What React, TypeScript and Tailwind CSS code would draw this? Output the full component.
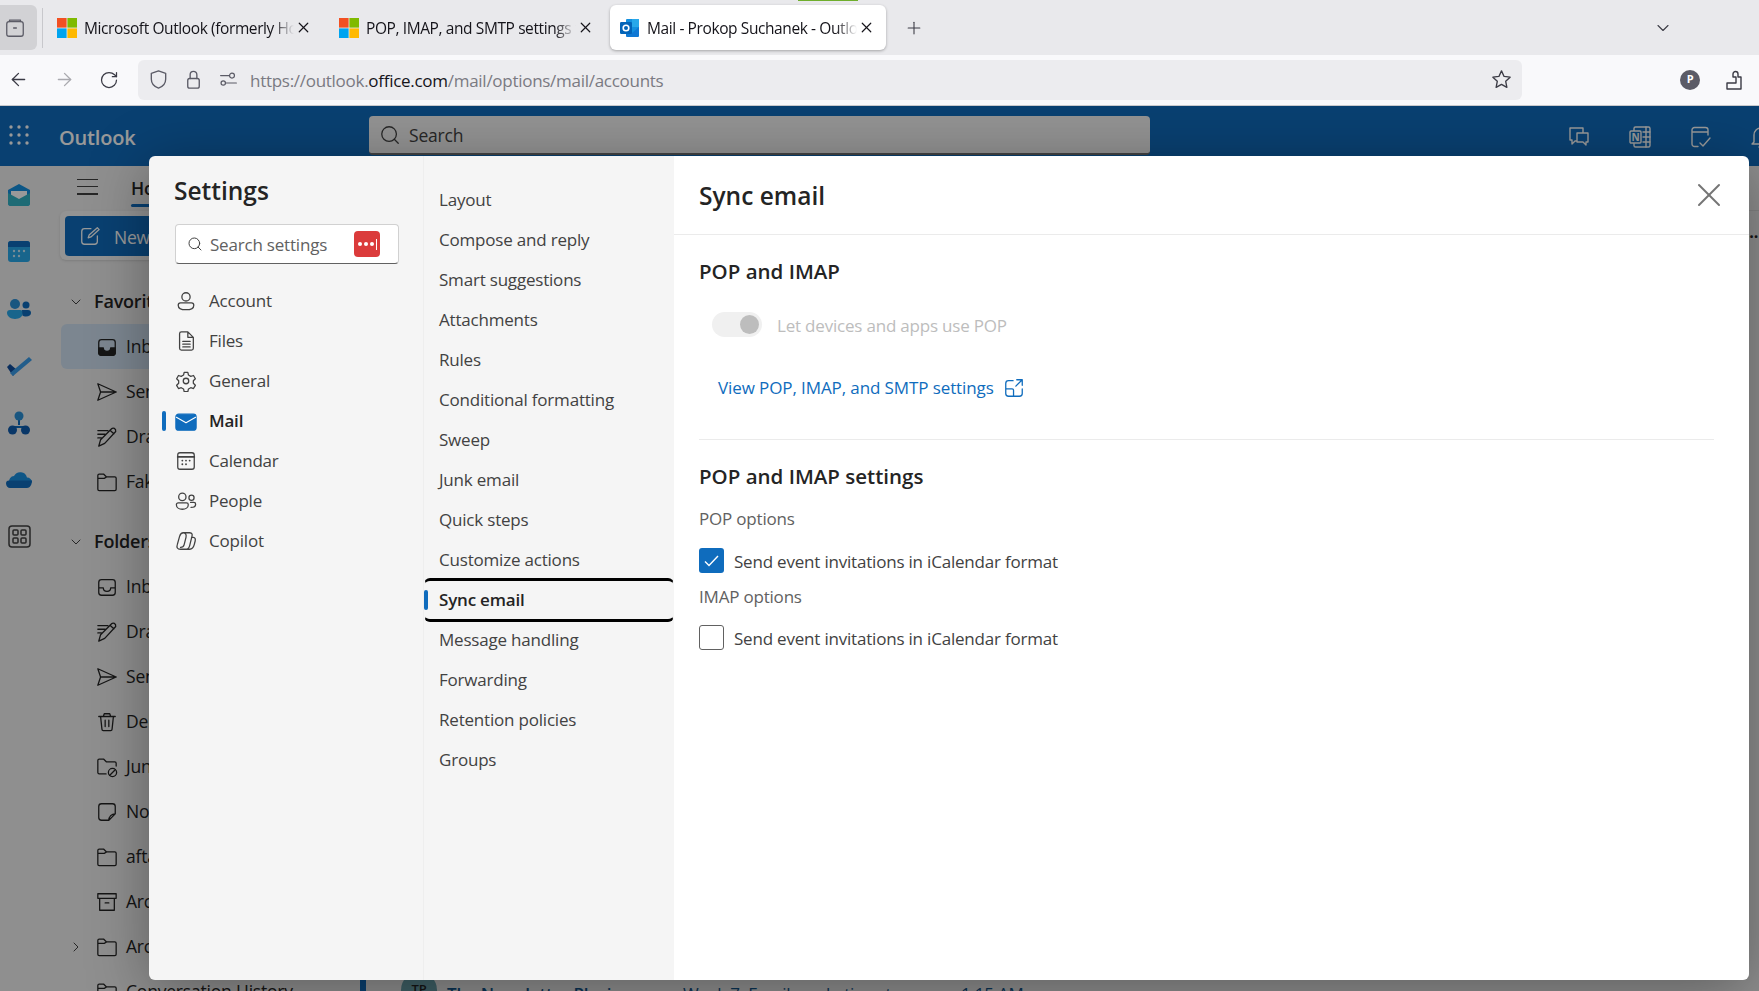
import { ChevronDown, ChevronRight, Plus, X, ArrowLeft, ArrowRight, RotateCw, Search } from 'lucide-react'
import type { ReactNode } from 'react'

const font = 'font-["Open_Sans","Noto_Sans",sans-serif]'

function Line({ children, size = 24, className = '' }: { children: ReactNode; size?: number; className?: string }) {
  return (
    <svg width={size} height={size} viewBox="0 0 24 24" fill="none" stroke="currentColor" strokeWidth="1.4" strokeLinecap="round" strokeLinejoin="round" className={`shrink-0 ${className}`}>
      {children}
    </svg>
  )
}

function MsLogo() {
  return (
    <svg width="20" height="20" viewBox="0 0 20 20" className="shrink-0">
      <rect width="9.6" height="9.6" fill="#f25022" />
      <rect x="10.4" width="9.6" height="9.6" fill="#7fba00" />
      <rect y="10.4" width="9.6" height="9.6" fill="#00a4ef" />
      <rect x="10.4" y="10.4" width="9.6" height="9.6" fill="#ffb900" />
    </svg>
  )
}

function OutlookLogo() {
  return (
    <svg width="20" height="20" viewBox="0 0 20 20" className="shrink-0">
      <rect x="6" y="1" width="13" height="16" rx="1" fill="#1490df" />
      <rect x="12" y="1" width="7" height="8" fill="#28a8ea" />
      <path d="M6 10l6 5 7-6v9a1 1 0 0 1-1 1H7a1 1 0 0 1-1-1z" fill="#0f78d4" />
      <rect x="0" y="4" width="12" height="12" rx="1.2" fill="#0364b8" />
      <circle cx="6" cy="10" r="2.8" fill="none" stroke="#fff" strokeWidth="1.6" />
    </svg>
  )
}

function Tab({ logo, title, active }: { logo: ReactNode; title: string; active?: boolean }) {
  return (
    <div className={`flex h-[45px] w-[276px] items-center rounded-md pl-[10px] ${active ? 'bg-white shadow-[0_1px_3px_rgba(0,0,0,0.3)]' : ''}`}>
      {logo}
      <span className="ml-[7px] w-[210px] overflow-hidden whitespace-nowrap pt-[2px] text-[15.500px] tracking-[-0.4px] text-[#15141a] [mask-image:linear-gradient(to_right,black_90%,transparent)]">
        {title}
      </span>
      <X size={17} strokeWidth={1.700} className="ml-[1px] text-[#15141a]" />
    </div>
  )
}

function BrowserChrome() {
  return (
    <>
      <div className="relative flex h-[55px] items-center bg-[#e9e9ec]">
        <div className="absolute left-[798px] top-0 h-[1px] w-[60px] bg-[#6fae2c]" />
        <div className="flex h-[45px] w-[37px] items-center justify-center rounded-r-md bg-[#d2d2d5] pr-[8px] text-[#5b5b66]">
          <Line size={22}>
            <rect x="3" y="5" width="18" height="16" rx="2.5" />
            <path d="M6 5V3.5h12V5M10.5 12h3" />
          </Line>
        </div>
        <div className="ml-[5px] h-[40px] w-px bg-[#c8c8cc]" />
        <div className="ml-[4px]">
          <Tab logo={<MsLogo />} title="Microsoft Outlook (formerly Hotmail)" />
        </div>
        <div className="ml-[6px]">
          <Tab logo={<MsLogo />} title="POP, IMAP, and SMTP settings for Outlook" />
        </div>
        <div className="ml-[5px]">
          <Tab logo={<OutlookLogo />} title="Mail - Prokop Suchanek - Outlook" active />
        </div>
        <Plus size={20} strokeWidth={1.3} className="ml-[18px] text-[#3b3b45]" />
        <ChevronDown size={20} strokeWidth={1.3} className="ml-auto mr-[86px] text-[#3b3b45]" />
      </div>
      <div className="flex h-[51px] items-center border-b border-[#c9c9cc] bg-[#f9f9fb] pb-[1px]">
        <ArrowLeft size={21} strokeWidth={1.5} className="ml-[8px] text-[#3b3b45]" />
        <ArrowRight size={21} strokeWidth={1.5} className="ml-[25px] text-[#a9a9ae]" />
        <RotateCw size={20} strokeWidth={1.5} className="ml-[24px] text-[#3b3b45]" />
        <div className="ml-[19px] flex h-[40px] w-[1384px] items-center rounded-md bg-[#ececef] text-[#5b5b66]">
          <Line size={23} className="ml-[9px]">
            <path d="M12 3l7.5 2.5v6c0 4.5-3 8-7.5 9.5-4.500-1.500-7.500-5-7.500-9.500v-6z" />
          </Line>
          <Line size={23} className="ml-[12px]">
            <rect x="6" y="11" width="12" height="10" rx="2" />
            <path d="M8.500 11V7a3.500 3.500 0 0 1 7 0v4" />
          </Line>
          <Line size={21} className="ml-[13px]">
            <circle cx="16" cy="7.500" r="2.800" />
            <circle cx="6" cy="16" r="2.500" />
            <path d="M3 7.500h10M9 16h12" />
          </Line>
          <span className="ml-[11px] whitespace-nowrap pt-[3px] text-[17px] tracking-[-0.28px] text-[#7a7a82]">
            https://outlook.<span className="text-[#15141a]">office.com</span>/mail/options/mail/accounts
          </span>
          <Line size={23} className="ml-auto mr-[9px] text-[#3b3b45]">
            <path d="M12 3l2.700 5.800 6.300.8-4.600 4.300 1.200 6.300L12 17.100l-5.600 3.100 1.200-6.300L3 9.600l6.300-.8z" />
          </Line>
        </div>
        <div className="ml-[158px] flex size-[20px] items-center justify-center rounded-full bg-[#5b5b66] text-[11px] font-bold text-white">P</div>
        <Line size={24} className="ml-[22px] text-[#3b3b45]">
          <path d="M5 21v-6h9V9h-3V6a2.500 2.500 0 0 1 5 0v3h3v12z" />
        </Line>
      </div>
    </>
  )
}

function RailIcon({ children }: { children: ReactNode }) {
  return <div className="flex h-[57px] items-center justify-center">{children}</div>
}

function Rail() {
  return (
    <div className="flex w-[38px] shrink-0 flex-col">
      <RailIcon>
        <svg width="24" height="22" viewBox="0 0 24 22">
          <path d="M12 0l11 6v13a3 3 0 0 1-3 3H4a3 3 0 0 1-3-3V6z" fill="#1490df" />
          <path d="M4 7h16v5l-8 4-8-4z" fill="#fff" />
          <path d="M1 19V9l11 6 11-6v10a3 3 0 0 1-3 3H4a3 3 0 0 1-3-3z" fill="#33b3c4" />
        </svg>
      </RailIcon>
      <RailIcon>
        <svg width="22" height="21" viewBox="0 0 22 21">
          <rect width="22" height="21" rx="3" fill="#28a8ea" />
          <path d="M0 6V3a3 3 0 0 1 3-3h16a3 3 0 0 1 3 3v3z" fill="#0f6cbd" />
          <g fill="#fff" opacity="0.75">
            <circle cx="6" cy="10" r="1.200" /><circle cx="11" cy="10" r="1.200" /><circle cx="16" cy="10" r="1.200" />
            <circle cx="6" cy="15" r="1.200" /><circle cx="11" cy="15" r="1.200" />
          </g>
        </svg>
      </RailIcon>
      <RailIcon>
        <svg width="24" height="20" viewBox="0 0 24 20">
          <circle cx="8" cy="5" r="5" fill="#2a8fd6" />
          <circle cx="19" cy="6" r="3.500" fill="#0f6cbd" />
          <path d="M0 14a3 3 0 0 1 3-3h10a3 3 0 0 1 3 3c0 3-3.500 6-8 6s-8-3-8-6z" fill="#28a8ea" />
          <path d="M15 11h6a3 3 0 0 1 3 3c0 2-2 3.500-5 3.500-1.500 0-2.500-.3-3.500-1z" fill="#0f6cbd" />
        </svg>
      </RailIcon>
      <RailIcon>
        <svg width="25" height="20" viewBox="0 0 25 20">
          <path d="M0 11l3-3 7 6-4 6z" fill="#0f4c9c" />
          <path d="M6 20l-3-3L22 1l3 3z" fill="#3a9be8" />
        </svg>
      </RailIcon>
      <RailIcon>
        <svg width="22" height="24" viewBox="0 0 22 24" fill="none">
          <path d="M11 8v6M4 19v-3h14v3" stroke="#0f6cbd" strokeWidth="2" />
          <circle cx="11" cy="5" r="4.500" fill="#2a8fd6" />
          <circle cx="4.500" cy="19" r="4.500" fill="#0f5cae" />
          <circle cx="17.500" cy="19" r="4.500" fill="#0f5cae" />
        </svg>
      </RailIcon>
      <RailIcon>
        <svg width="26" height="17" viewBox="0 0 26 17">
          <path d="M8 5a7 7 0 0 1 13 1.500 5 5 0 0 1 5 5H3a5.500 5.500 0 0 1 5-6.500z" fill="#1a8fe0" />
          <path d="M0 12.500a3 3 0 0 1 3-3h23c0 4-2 7.500-5 7.500H4c-2 0-4-2-4-4.500z" fill="#0f6cbd" />
        </svg>
      </RailIcon>
      <RailIcon>
        <svg width="23" height="23" viewBox="0 0 23 23" fill="none" stroke="#424242" strokeWidth="1.500">
          <rect x="1" y="1" width="21" height="21" rx="3" />
          <rect x="5" y="5" width="5" height="5" rx="1" /><rect x="13" y="5" width="5" height="5" rx="1" />
          <rect x="5" y="13" width="5" height="5" rx="1" /><rect x="13" y="13" width="5" height="5" rx="1" />
        </svg>
      </RailIcon>
    </div>
  )
}

const folderPath = <path d="M2 20V5a1.500 1.500 0 0 1 1.500-1.500h5l3 3h9A1.500 1.500 0 0 1 22 8v12a1.500 1.500 0 0 1-1.500 1.500h-17A1.500 1.500 0 0 1 2 20zM2 8h7l2.500-1.500" />
const sendPath = <path d="M2 3l20 9-20 9 3-9zM5 12h17" />
const draftPath = (
  <path d="M2 5h11M2 9h8M2 13h4M3 22l2-7L17 3c1.500-1.500 5-.5 4.500 3L9.500 19zM15.500 5l4 3.500" />
)
const inboxPath = <path d="M3 7a3 3 0 0 1 3-3h12a3 3 0 0 1 3 3v11a3 3 0 0 1-3 3H6a3 3 0 0 1-3-3zM3 13h5c0 5 8 5 8 0h5" />
const inboxFilled = (
  <>
    <path d="M3 7a3 3 0 0 1 3-3h12a3 3 0 0 1 3 3v11a3 3 0 0 1-3 3H6a3 3 0 0 1-3-3z" />
    <path d="M3 13h5c0 5 8 5 8 0h5v5a3 3 0 0 1-3 3H6a3 3 0 0 1-3-3z" fill="currentColor" />
  </>
)

function FolderRow({ icon, label, active, caret }: { icon: ReactNode; label: string; active?: boolean; caret?: boolean }) {
  return (
    <div className={`relative flex h-[45px] items-center whitespace-nowrap pl-[35px] text-[17.500px] text-[#242424] ${active ? 'rounded-md bg-[#cfe0f0]' : ''}`}>
      {caret && <ChevronRight size={16} strokeWidth={1.5} className="absolute left-[7px] text-[#424242]" />}
      <Line size={22}>{icon}</Line>
      <span className="ml-[8px]">{label}</span>
    </div>
  )
}

function GroupTitle({ label }: { label: string }) {
  return (
    <div className="flex h-[45px] items-center pl-[7px] text-[18px] font-semibold text-[#242424]">
      <ChevronDown size={16} strokeWidth={1.5} className="text-[#424242]" />
      <span className="ml-[10px]">{label}</span>
    </div>
  )
}

function OutlookApp() {
  return (
    <div className="flex h-[885px] flex-col bg-[#eeeeee]">
      <div className="flex h-[60px] shrink-0 bg-[#0f6cbd] text-white">
        <div className="flex w-[38px] shrink-0 items-center justify-center pb-[2px]">
          <svg width="20" height="20" viewBox="0 0 20 20" fill="currentColor">
            {[2, 10, 18].flatMap((y) => [2, 10, 18].map((x) => <circle key={`${x}-${y}`} cx={x} cy={y} r="1.700" />))}
          </svg>
        </div>
        <span className="ml-[21px] mt-[17px] w-[310px] shrink-0 text-[20px] font-semibold">Outlook</span>
        <div className="mt-[10px] flex h-[39px] w-[781px] shrink-0 items-center rounded-[4px] border-b-2 border-[#707070] bg-[#f3f3f3] text-[#424242]">
          <Search size={22} strokeWidth={1.400} className="ml-[10px]" />
          <span className="ml-[8px] pt-[1px] text-[17.500px]">Search</span>
        </div>
        <div className="ml-[417px] mt-[19px] flex shrink-0 gap-[36.500px]">
          <Line size={24}>
            <path d="M16 8V3H3v12h2v4l3-3h2M10 8h11v9h-2v3l-3-3h-6z" />
          </Line>
          <Line size={24}>
            <rect x="6" y="2" width="16" height="20" rx="1.500" />
            <rect x="2" y="6" width="11" height="12" rx="1" fill="#0f6cbd" />
            <text x="7.500" y="15.500" textAnchor="middle" fontSize="10" fontWeight="700" fill="currentColor" stroke="none">N</text>
            <path d="M15 7h7M15 12h7M15 17h7M18 2v20" />
          </Line>
          <Line size={24}>
            <path d="M20 10V5a2.500 2.500 0 0 0-2.500-2.500h-11A2.500 2.500 0 0 0 4 5v14a2.500 2.500 0 0 0 2.500 2.500H10M4 7h16M12 18l3 3 7-8" />
          </Line>
          <Line size={24}>
            <path d="M5 17V10a7 7 0 0 1 14 0v7l2 2H3zM10 22h4" />
          </Line>
        </div>
      </div>
      <div className="flex min-h-0 flex-1 overflow-hidden">
        <Rail />
        <div className="w-[310px] shrink-0 pl-[23px]">
          <div className="flex h-[45px] items-center">
            <div className="mb-[4px] ml-[16px] flex h-[16px] w-[21px] flex-col justify-between">
              <div className="h-[1.500px] bg-[#424242]" /><div className="h-[1.500px] bg-[#424242]" /><div className="h-[1.500px] bg-[#424242]" />
            </div>
            <div className="relative ml-[33px] text-[17.500px] font-semibold text-[#242424]">
              Home
              <div className="absolute -bottom-[5px] left-0 h-[3px] w-full rounded bg-[#0f6cbd]" />
            </div>
          </div>
          <div className="-ml-[1px] flex h-[49px] items-center rounded-md bg-[#f5f5f5] pl-[5px] shadow-sm">
            <div className="flex h-[40px] w-[150px] items-center rounded bg-[#0f6cbd] pl-[14px] text-white">
              <Line size={22}><path d="M20 12v6a3 3 0 0 1-3 3H6a3 3 0 0 1-3-3V7a3 3 0 0 1 3-3h7M10 14l1-3 9-8 2 2-9 8z" /></Line>
              <span className="ml-[13px] whitespace-nowrap pt-[3px] text-[17.500px]">New mail</span>
            </div>
          </div>
          <div className="mt-[19px]">
            <GroupTitle label="Favorites" />
            <FolderRow active icon={inboxFilled} label="Inbox" />
            <FolderRow icon={sendPath} label="Sent Items" />
            <FolderRow icon={draftPath} label="Drafts" />
            <FolderRow icon={folderPath} label="Fake" />
            <div className="h-[15px]" />
            <GroupTitle label="Folders" />
            <FolderRow icon={inboxPath} label="Inbox" />
            <FolderRow icon={draftPath} label="Drafts" />
            <FolderRow icon={sendPath} label="Sent Items" />
            <FolderRow icon={<path d="M3 6h18M8 6l1-3h6l1 3M5 6l1.500 14a1.500 1.500 0 0 0 1.500 1.500h8a1.500 1.500 0 0 0 1.500-1.500L19 6M10 10v7M14 10v7" />} label="Deleted Items" />
            <FolderRow icon={<><path d="M2 18V5a1.500 1.500 0 0 1 1.500-1.500h5l3 3h9A1.500 1.500 0 0 1 22 8v3M2 18a1.500 1.500 0 0 0 1.500 1.500H11" /><circle cx="18" cy="18" r="4.500" /><path d="M15 21l6-6" /></>} label="Junk Email" />
            <FolderRow icon={<path d="M21 14V6a3 3 0 0 0-3-3H6a3 3 0 0 0-3 3v12a3 3 0 0 0 3 3h8zM14 21c0-4 3-7 7-7" />} label="Notes" />
            <FolderRow icon={folderPath} label="aftab" />
            <FolderRow icon={<path d="M2 3h20v5H2zM4 8v13h16V8M10 13h4" />} label="Archive" />
            <FolderRow caret icon={folderPath} label="Archive" />
            <FolderRow icon={folderPath} label="Conversation History" />
          </div>
        </div>
        <div className="relative flex-1">
          <div className="mt-[806px] flex h-[48px] items-start whitespace-nowrap pl-[12px] text-[17px] text-[#0f548c]">
            <div className="h-[48px] w-[6px] bg-[#0f6cbd]" />
            <div className="ml-[35px] flex size-[36px] shrink-0 items-center justify-center rounded-full bg-[#69a0aa] text-[13px] font-semibold text-[#242424]">TP</div>
            <span className="ml-[10px] w-[236px] pt-[9px] font-semibold">The Newsletter Playi...</span>
            <span className="w-[278px] pt-[9px]">Week 7: Email marketing st...</span>
            <span className="pt-[9px]">1:15 AM</span>
          </div>
          <div className="absolute right-0 top-[44px] h-px w-[20px] bg-[#dddddd]" />
          <div className="absolute right-[1px] top-[58px] text-[16px] font-bold leading-none text-[#242424]">...</div>
        </div>
      </div>
    </div>
  )
}

const mainNav: { label: string; icon: ReactNode; active?: boolean }[] = [
  { label: 'Account', icon: <><circle cx="12" cy="7.500" r="4.500" /><path d="M3.500 16.500A2.500 2.500 0 0 1 6 14h12a2.500 2.500 0 0 1 2.500 2.500c0 3-3.500 5-8.500 5s-8.500-2-8.500-5z" /></> },
  { label: 'Files', icon: <path d="M5 4a2 2 0 0 1 2-2h7l6 6v12a2 2 0 0 1-2 2H7a2 2 0 0 1-2-2zM14 2v6h6M8.500 12.500h8M8.500 15.500h8M8.500 18.500h8" /> },
  { label: 'General', icon: <><circle cx="12" cy="12" r="3" /><path d="M10 2.500h4l.7 3 2.500 1.400 3-.9 2 3.500-2.200 2.200v2.800l2.200 2.200-2 3.500-3-.9-2.500 1.400-.7 3h-4l-.7-3-2.500-1.400-3 .9-2-3.500 2.200-2.200v-2.800L1.800 9.500l2-3.500 3 .9 2.500-1.400z" /></> },
  { label: 'Mail', active: true, icon: <><path d="M1 7.500a3 3 0 0 1 3-3h16a3 3 0 0 1 3 3V19a3 3 0 0 1-3 3H4a3 3 0 0 1-3-3z" fill="#0f6cbd" stroke="#0f6cbd" /><path d="M1.500 8L12 14l10.500-6" stroke="#fff" strokeWidth="1.200" /></> },
  { label: 'Calendar', icon: <><rect x="3" y="3" width="18" height="18" rx="2.500" /><path d="M3 7.500h18M8 11.500h.01M12 11.500h.01M16 11.500h.01M8 15.500h.01M12 15.500h.01" strokeWidth="2" /></> },
  { label: 'People', icon: <><circle cx="8" cy="7.500" r="4" /><circle cx="18" cy="8.500" r="2.800" /><path d="M1.500 16a2 2 0 0 1 2-2h9a2 2 0 0 1 2 2c0 3-3 5-6.500 5s-6.500-2-6.500-5zM17 13.500h3.500a2 2 0 0 1 2 2c0 2-2 3.500-5 3.500" /></> },
  { label: 'Copilot', icon: <path d="M9 3h7c3 0 3 2 2.500 4L16 17c-.6 2.500-2 4-4.500 4H6c-3.500 0-4.500-2-3.500-5L5 7c.8-2.500 2-4 4-4zM9 3c3 0 3.500 3 3 5l-2 8c-.5 2-2 3-4 3M18 8h2c2 0 2.500 2 2 4l-1 4c-.8 3-2 5-5 5h-4" /> },
]

const subNav = ['Layout', 'Compose and reply', 'Smart suggestions', 'Attachments', 'Rules', 'Conditional formatting', 'Sweep', 'Junk email', 'Quick steps', 'Customize actions', 'Sync email', 'Message handling', 'Forwarding', 'Retention policies', 'Groups']

function SettingsNav() {
  return (
    <div className="w-[275px] shrink-0 border-r border-[#eeeeee] bg-[#f5f5f5] pl-[26px] pt-[19px]">
      <h2 className="-ml-[1px] h-[32px] text-[24.500px] font-semibold leading-[32px] tracking-normal text-[#242424]">Settings</h2>
      <div className="mt-[17px] flex h-[40px] w-[224px] items-center rounded-[4px] border border-[#d1d1d1] border-b-[#616161] bg-white pl-[11px]">
        <Search size={16} strokeWidth={1.500} className="text-[#424242]" />
        <span className="ml-[7px] pt-[1px] text-[17px] text-[#616161]">Search settings</span>
        <div className="ml-auto mr-[18px] flex h-[26px] w-[26px] items-center justify-center gap-[2px] rounded-[4px] bg-[#db3b3b]">
          <span className="size-[4px] rounded-full bg-white" />
          <span className="size-[4px] rounded-full bg-white" />
          <span className="size-[4px] rounded-full bg-white" />
          <span className="h-[11px] w-px bg-white" />
        </div>
      </div>
      <div className="mt-[17px]">
        {mainNav.map((item) => (
          <div key={item.label} className={`relative flex h-[40px] items-center text-[17px] ${item.active ? 'font-semibold text-[#242424]' : 'text-[#424242]'}`}>
            {item.active && <div className="absolute -left-[13px] top-[10px] h-[20px] w-[4px] rounded-full bg-[#0f6cbd]" />}
            <Line size={22} className="text-[#424242]">{item.icon}</Line>
            <span className="ml-[12px]">{item.label}</span>
          </div>
        ))}
      </div>
    </div>
  )
}

function SubNav() {
  return (
    <div className="w-[250px] shrink-0 bg-[#f5f5f5] pt-[24px] text-[17px] text-[#424242]">
      {subNav.map((label) =>
        label === 'Sync email' ? (
          <div key={label} className="relative flex h-[40px] items-center font-semibold text-[#242424]">
            <div className="absolute inset-x-0 -inset-y-[2px] rounded-md border-x border-y-[3px] border-x-transparent border-y-black" />
            <div className="absolute left-0 top-[10px] h-[20px] w-[4px] rounded-full bg-[#0f6cbd]" />
            <span className="pl-[15px]">{label}</span>
          </div>
        ) : (
          <div key={label} className="flex h-[40px] items-center pl-[15px]">{label}</div>
        ),
      )}
    </div>
  )
}

function CheckRow({ checked, label, className }: { checked?: boolean; label: string; className: string }) {
  return (
    <div className={`flex h-[25px] items-center ${className}`}>
      <div className={`flex size-[25px] items-center justify-center rounded-[3px] ${checked ? 'bg-[#0f6cbd]' : 'border border-[#616161]'}`}>
        {checked && (
          <svg width="15" height="12" viewBox="0 0 15 12" fill="none" stroke="#fff" strokeWidth="1.400">
            <path d="M1 6.500l4 4L14 1" />
          </svg>
        )}
      </div>
      <span className="ml-[10px] pt-[2px] text-[17px] text-[#424242]">{label}</span>
    </div>
  )
}

function SyncEmail() {
  return (
    <div className="flex min-w-0 flex-1 flex-col bg-white">
      <div className="flex h-[79px] shrink-0 items-center border-b border-[#ebebeb] pl-[25px]">
        <h1 className="pt-[2px] text-[24.500px] font-semibold tracking-normal text-[#242424]">Sync email</h1>
        <X size={40} strokeWidth={1.200} className="ml-auto mr-[20px] text-[#757575]" />
      </div>
      <div className="pl-[25px] pr-[35px]">
        <h3 className="mt-[22px] h-[28px] text-[20.500px] font-semibold leading-[28px] tracking-normal text-[#242424]">POP and IMAP</h3>
        <div className="ml-[13px] mt-[27px] flex h-[25px] items-center">
          <div className="flex h-[25px] w-[50px] items-center justify-end rounded-full bg-[#f0f0f0] pr-[3px]">
            <div className="size-[19px] rounded-full bg-[#bdbdbd]" />
          </div>
          <span className="ml-[15px] pt-[2px] text-[17px] text-[#bdbdbd]">Let devices and apps use POP</span>
        </div>
        <div className="ml-[19px] mt-[39px] flex h-[24px] items-center text-[17px] tracking-[-0.1px] text-[#0f6cbd]">
          <span>View POP, IMAP, and SMTP settings</span>
          <Line size={22} className="ml-[9px]">
            <path d="M11 4H6a3 3 0 0 0-3 3v11a3 3 0 0 0 3 3h12a3 3 0 0 0 3-3v-5M3 13h7a1.500 1.500 0 0 1 1.500 1.500V21M15 3h6v6M21 3l-7 7" />
          </Line>
        </div>
        <div className="mt-[39px] h-px bg-[#ebebeb]" />
        <h3 className="mt-[22px] h-[28px] text-[20.500px] font-semibold leading-[28px] tracking-normal text-[#242424]">POP and IMAP settings</h3>
        <div className="mt-[17px] h-[24px] text-[17px] leading-[24px] text-[#616161]">POP options</div>
        <CheckRow checked label="Send event invitations in iCalendar format" className="mt-[17px]" />
        <div className="mt-[12px] h-[24px] text-[17px] leading-[24px] text-[#616161]">IMAP options</div>
        <CheckRow label="Send event invitations in iCalendar format" className="mt-[16px]" />
      </div>
    </div>
  )
}

export default function App() {
  return (
    <div className={`h-[991px] w-[1759px] overflow-hidden bg-white tracking-[-0.2px] ${font}`}>
      <BrowserChrome />
      <div className="relative h-[885px] overflow-hidden">
        <OutlookApp />
        <div className="absolute inset-0 bg-black/40" />
        <div className="absolute bottom-[11px] left-[149px] right-[10px] top-[50px] flex overflow-hidden rounded-[6px] shadow-[0_10px_60px_rgba(0,0,0,0.35)]">
          <SettingsNav />
          <SubNav />
          <SyncEmail />
        </div>
      </div>
    </div>
  )
}
